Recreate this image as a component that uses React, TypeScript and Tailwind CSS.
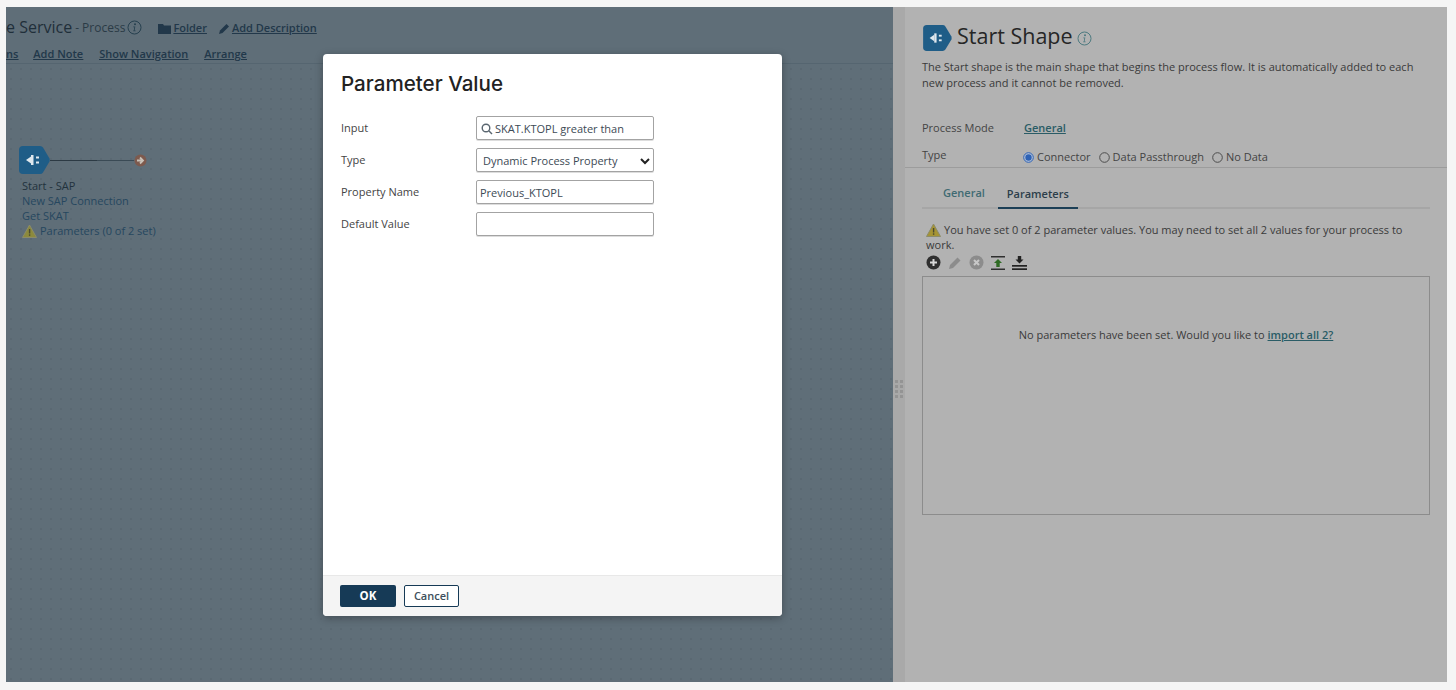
import React from "react";

const Plug = ({ w, h }: { w: number; h: number }) => (
  <svg width={w} height={h} viewBox="0 0 31 28">
    <path d="M4 0H21Q23 0 24 1.5L30.5 12.5Q31 14 30.5 15.500L24 26.500Q23 28 21 28H4Q0 28 0 24V4Q0 0 4 0Z" fill="#1f5d87" />
    <path d="M7 14L12 10.500V17.500Z" fill="#dfe8ee" />
    <rect x="12" y="9" width="2.500" height="10" fill="#dfe8ee" />
    <rect x="17" y="10.500" width="3" height="2" fill="#dfe8ee" />
    <rect x="17" y="15.500" width="3" height="2" fill="#dfe8ee" />
  </svg>
);

const Warn = ({ fill = "#a69433" }: { fill?: string }) => (
  <svg width="15" height="14" viewBox="0 0 15 14">
    <path d="M7.5 1L14.5 13.5H.5Z" fill={fill} stroke="#8b8b6a" strokeWidth="1" strokeLinejoin="round" />
    <rect x="6.9" y="5" width="1.4" height="4.5" fill="#4a4a30" />
    <rect x="6.9" y="10.3" width="1.4" height="1.5" fill="#4a4a30" />
  </svg>
);

const Info = ({ c }: { c: string }) => (
  <svg width="15" height="15" viewBox="0 0 15 15">
    <circle cx="7.5" cy="7.5" r="6.5" fill="none" stroke={c} strokeWidth="1" />
    <circle cx="8" cy="4.3" r="1" fill={c} />
    <path d="M6.3 6.6H8.3L7.6 10.6H8.6V11.3H6.2V10.6H6.8L7.3 7.3H6.3Z" fill={c} />
  </svg>
);

const Radio = ({ on }: { on?: boolean }) => (
  <svg width="11" height="11" viewBox="0 0 11 11" className="shrink-0">
    <circle cx="5.5" cy="5.5" r="4.8" fill={on ? "#b8c4d8" : "none"} stroke={on ? "#2e62b5" : "#4d4d4d"} strokeWidth="1" />
    {on && <circle cx="5.5" cy="5.5" r="3.2" fill="#2e62b5" />}
  </svg>
);

const Field = ({ label, children }: { label: string; children: React.ReactNode }) => (
  <div className="flex h-6 items-center">
    <div className="w-[135px] text-[11px] text-[#444]">{label}</div>
    <div className="flex h-6 w-[178px] items-center rounded-[2px] border border-[#a3a3a3] bg-white pt-[2px] text-[11px] text-[#3d4a55] shadow-[0_1px_0_#ddd]">
      {children}
    </div>
  </div>
);

export default function App() {
  return (
    <div className="relative flex h-[690px] w-full bg-[#f5f5f5] pb-2 pl-[6px] pr-[9px] pt-[7px] font-['Open_Sans',sans-serif]">
      <div className="flex w-[887px] flex-col bg-[#5f6e78]">
        <div className="flex h-[57px] flex-col border-b border-[#556570] text-[#22384a]">
          <div className="flex h-[41px] items-end pb-[10px]">
            <span className="text-[16px] leading-[22px] text-[#1f2f3a]">e Service</span>
            <span className="ml-[3px] text-[12px] leading-[20px] text-[#2b3b46]">- Process</span>
            <span className="ml-[2px] mb-[3px]"><Info c="#26404f" /></span>
            <svg className="ml-[16px] mb-[4px]" width="13" height="11" viewBox="0 0 13 11"><path d="M0 1H5L6 2.5H13V11H0Z" fill="#22384a" /></svg>
            <a className="ml-[2px] text-[11px] font-semibold leading-[20px] underline">Folder</a>
            <svg className="ml-[12px] mb-[4px]" width="11" height="11" viewBox="0 0 11 11"><path d="M0 11L1 7.5L7.5 1L10 3.5L3.5 10Z" fill="#22384a" /></svg>
            <a className="ml-[2px] text-[11px] font-semibold leading-[20px] underline">Add Description</a>
          </div>
          <div className="flex gap-4 text-[11px] font-semibold leading-[16px] underline -mt-[2px]">
            <a>ns</a>
            <a className="ml-[-1px]">Add Note</a>
            <a>Show Navigation</a>
            <a>Arrange</a>
          </div>
        </div>
        <div className="flex-1 bg-[radial-gradient(#5a6872_0.8px,transparent_0.8px)] bg-[length:10px_10px] pl-[13px] pt-[82px]">
          <div className="flex items-center">
            <Plug w={31} h={28} />
            <div className="h-[1px] w-[47px] bg-[#2c3a44]" />
            <div className="h-[1px] w-[37px] bg-[#3a4a55]" />
            <svg width="13" height="13" viewBox="0 0 13 13">
              <circle cx="6.5" cy="6.5" r="6" fill="#7d5a4e" />
              <path d="M3 6.5H8M6 3.500L9 6.5L6 9.500" fill="none" stroke="#c9c1b8" strokeWidth="1.800" />
            </svg>
          </div>
          <div className="mt-[4px] pl-[3px] text-[11px] leading-[15px] text-[#22323d]">
            <div>Start - SAP</div>
            <div className="text-[#26475f]">New SAP Connection</div>
            <div className="text-[#26475f]">Get SKAT</div>
            <div className="flex items-center gap-[3px] text-[#26475f]">
              <Warn fill="#8c8a3c" />
              <span>Parameters (0 of 2 set)</span>
            </div>
          </div>
        </div>
      </div>

      <div className="flex w-[12px] items-start justify-center bg-[#a9a9a9] pt-[373px]">
        <div className="grid grid-cols-2 gap-[2px]">
          {[0, 1, 2, 3, 4, 5, 6, 7].map((i) => (
            <div key={i} className="h-[3px] w-[3px] bg-[#949494]" />
          ))}
        </div>
      </div>

      <div className="flex flex-1 flex-col bg-[#b2b2b2] text-[#333]">
        <div className="h-[161px] border-b border-[#9c9c9c] px-[17px] pt-[18px]">
          <div className="flex h-[26px] items-center">
            <Plug w={31} h={26} />
            <span className="ml-[4px] -mt-[4px] text-[21.5px] leading-[26px] text-[#262626]">Start Shape</span>
            <span className="ml-[4px]"><Info c="#4d7a80" /></span>
          </div>
          <p className="mt-[8px] w-[505px] text-[11px] leading-[16px] text-[#3a3a3a]">
            The Start shape is the main shape that begins the process flow. It is automatically added to each new process and it cannot be removed.
          </p>
          <div className="mt-[29px] flex text-[11px] leading-[16px]">
            <span className="w-[102px] text-[#444]">Process Mode</span>
            <a className="font-semibold text-[#2a5c66] underline">General</a>
          </div>
          <div className="mt-[11px] flex items-start text-[11px] leading-[16px] text-[#444]">
            <span className="w-[101px]">Type</span>
            <div className="mt-[2px] flex items-center gap-[8px]">
              <span className="flex items-center gap-[3px]"><Radio on />Connector</span>
              <span className="flex items-center gap-[3px]"><Radio />Data Passthrough</span>
              <span className="flex items-center gap-[3px]"><Radio />No Data</span>
            </div>
          </div>
        </div>
        <div className="flex flex-1 flex-col pl-[17px] pr-[17px]">
          <div className="flex h-[41px] items-end border-b-2 border-[#a6a6a6] pl-[21px] text-[11px] font-semibold">
            <div className="flex h-[22px] items-start text-[#3f6a72]">General</div>
            <div className="-mb-[2px] ml-[13px] flex h-[26px] items-start border-b-2 border-[#1c3f56] px-[9px] pt-[3px] text-[#2c3e4a]">Parameters</div>
          </div>
          <div className="mt-[13px] pl-[4px] text-[11px] leading-[15px] text-[#3a3a3a]">
            <div className="flex items-center gap-[3px]"><Warn /><span>You have set 0 of 2 parameter values. You may need to set all 2 values for your process to</span></div>
            <div>work.</div>
          </div>
          <div className="mt-[3px] flex h-[15px] items-center gap-[7px] pl-[4px]">
            <svg width="15" height="15" viewBox="0 0 15 15"><circle cx="7.5" cy="7.5" r="7" fill="#2f2f2f" /><path d="M7.5 4V11M4 7.5H11" stroke="#d8d8d8" strokeWidth="2" /></svg>
            <svg width="14" height="14" viewBox="0 0 14 14"><path d="M1 13L2 9L9.5 1.5L12.5 4.5L5 12Z" fill="#8c8c8c" /></svg>
            <svg width="15" height="15" viewBox="0 0 15 15"><circle cx="7.5" cy="7.5" r="7" fill="#8c8c8c" /><path d="M5 5L10 10M10 5L5 10" stroke="#c8c8c8" strokeWidth="2" /></svg>
            <svg width="14" height="14" viewBox="0 0 14 14"><rect y="0" width="14" height="1.5" fill="#2f2f2f" /><rect y="12.5" width="14" height="1.5" fill="#2f2f2f" /><path d="M7 3L11 7H8.7V11H5.3V7H3Z" fill="#2f6b24" /></svg>
            <svg width="15" height="14" viewBox="0 0 15 14"><path d="M7.5 7.5L11.5 3.5H9.2V0H5.8V3.5H3.5Z" fill="#222" /><rect y="9" width="15" height="1.7" fill="#222" /><rect y="12.3" width="15" height="1.7" fill="#222" /></svg>
          </div>
          <div className="mt-[6px] flex h-[239px] items-start justify-center border border-[#8c8c8c] pt-[50px] text-[11px] leading-[16px] text-[#3a3a3a]">
            <span>No parameters have been set. Would you like to <a className="font-semibold text-[#2a5c66] underline">import all 2?</a></span>
          </div>
        </div>
      </div>

      <div className="absolute left-[323px] top-[54px] flex h-[562px] w-[459px] flex-col overflow-hidden rounded-[4px] bg-white shadow-[0_2px_8px_rgba(0,0,0,0.3)]">
        <div className="flex-1 px-[18px] pt-[16px]">
          <h1 className="font-['Inter',sans-serif] text-[20.6px] font-medium leading-[27px] text-[#222]">Parameter Value</h1>
          <div className="mt-[19px] flex flex-col gap-2">
            <Field label="Input">
              <svg className="ml-[4px] shrink-0" width="12" height="12" viewBox="0 0 12 12" fill="none" stroke="#5a6670" strokeWidth="1.4"><circle cx="5" cy="5" r="3.8" /><path d="M8 8L11 11" /></svg>
              <span className="ml-[2px]">SKAT.KTOPL greater than</span>
            </Field>
            <Field label="Type">
              <span className="ml-[6px] flex-1">Dynamic Process Property</span>
              <svg className="mr-[3px]" width="10" height="8" viewBox="0 0 10 8" fill="none" stroke="#222" strokeWidth="2"><path d="M1 2L5 6L9 2" /></svg>
            </Field>
            <Field label="Property Name"><span className="ml-[3px]">Previous_KTOPL</span></Field>
            <Field label="Default Value"><span /></Field>
          </div>
        </div>
        <div className="flex h-[41px] items-center gap-2 border-t border-[#e8e8e8] bg-[#f4f4f4] pl-[17px]">
          <button className="h-[22px] w-[56px] rounded-[2px] bg-[#163a56] text-[11.5px] font-bold text-white">OK</button>
          <button className="h-[22px] w-[55px] rounded-[2px] border border-[#163a56] bg-white text-[11px] font-semibold text-[#3d4f5c]">Cancel</button>
        </div>
      </div>
    </div>
  );
}
